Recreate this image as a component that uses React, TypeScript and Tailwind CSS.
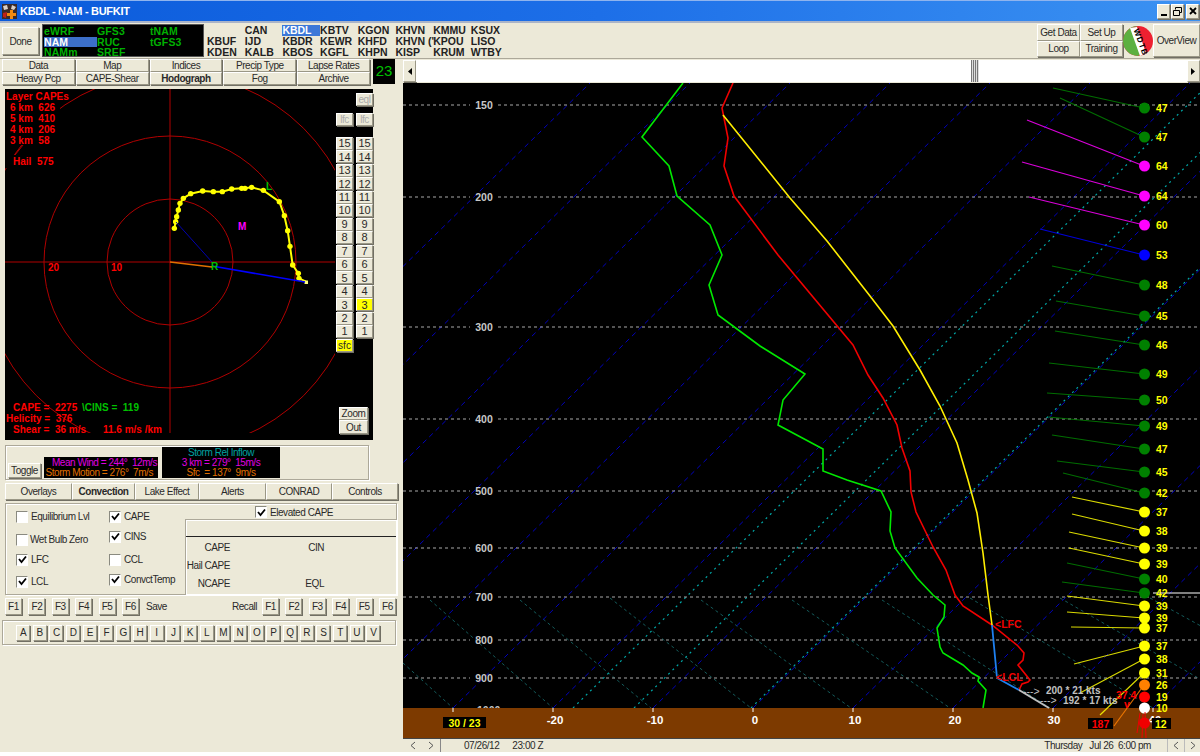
import type { ReactNode } from 'react'

const raised =
  'flex items-center justify-center whitespace-nowrap bg-[#ece9d8] border border-t-white border-l-white border-r-[#9a9786] border-b-[#9a9786] shadow-[1px_1px_0_#716f64] text-[#2a2a2a]'
const groove = 'border border-[#aca899] shadow-[1px_1px_0_#fff,inset_1px_1px_0_#fff]'

function Btn({ className = '', children }: { className?: string; children?: ReactNode }) {
  return <div className={`${raised} ${className}`}>{children}</div>
}

function Check({ label, on, className = '', gap = 'ml-[2px]' }: { label: string; on?: boolean; className?: string; gap?: string }) {
  return (
    <div className={`flex items-center h-[13px] ${className}`}>
      <div className="w-[12px] h-[12px] bg-white border border-t-[#8a8a80] border-l-[#8a8a80] border-r-white border-b-white flex items-center justify-center shrink-0">
        {on && (
          <svg width="9" height="9" viewBox="0 0 9 9">
            <path d="M1 4 L3.5 7 L8 1.5" fill="none" stroke="#000" strokeWidth="1.8" />
          </svg>
        )}
      </div>
      <span className={`${gap} whitespace-nowrap`}>{label}</span>
    </div>
  )
}

const modelCols = [
  [['eWRF'], ['NAM', 1], ['NAMm']],
  [['GFS3'], ['RUC'], ['SREF']],
  [['tNAM'], ['tGFS3'], ['']],
] as const

const stations = [
  ['', 'KBUF', 'KDEN'],
  ['CAN', 'IJD', 'KALB'],
  ['KBDL', 'KBDR', 'KBOS'],
  ['KBTV', 'KEWR', 'KGFL'],
  ['KGON', 'KHFD', 'KHPN'],
  ['KHVN', "KHVN ('", 'KISP'],
  ['KMMU', 'KPOU', 'KRUM'],
  ['KSUX', 'LISO', 'WTBY'],
]

const topTabs = ['Data', 'Map', 'Indices', 'Precip Type', 'Lapse Rates', 'Heavy Pcp', 'CAPE-Shear', 'Hodograph', 'Fog', 'Archive']
const lowerTabs = [
  ['Overlays', 'w-[67px]'],
  ['Convection', 'w-[63px]'],
  ['Lake Effect', 'w-[64px]'],
  ['Alerts', 'w-[67px]'],
  ['CONRAD', 'w-[66px]'],
  ['Controls', 'w-[66px]'],
]
const letters = 'ABCDEFGHIJKLMNOPQRSTUV'.split('')
const fkeys = ['F1', 'F2', 'F3', 'F4', 'F5', 'F6']
const levels = [15, 14, 13, 12, 11, 10, 9, 8, 7, 6, 5, 4, 3, 2, 1]

const hodoPts = [
  [523, 430], [527, 410], [530, 395], [535, 375], [540, 355], [550, 340], [572, 326], [608, 318], [640, 320],
  [667, 320], [695, 312], [725, 310], [735, 310], [755, 307], [790, 316], [838, 350], [853, 392], [863, 437],
  [870, 484], [878, 540], [895, 565], [897, 580], [918, 590],
].map(([x, y]) => [x / 3, y / 3 + 85])

function Hodograph() {
  const red = 'fill-[#ff0000]'
  return (
    <svg viewBox="5 89 368 351" className="absolute inset-0 w-full h-full text-[10px] font-bold tracking-normal">
      <defs>
        <clipPath id="hodoClip">
          <rect x="5" y="89" width="330" height="344" />
        </clipPath>
      </defs>
      <g clipPath="url(#hodoClip)" fill="none" stroke="#b00000" strokeWidth="1">
        <circle cx="170" cy="262" r="63" />
        <circle cx="170" cy="262" r="126" />
        <circle cx="170" cy="262" r="189" />
        <path d="M170 89V433M5 262H335" />
      </g>
      <rect x="5" y="89" width="55" height="56" fill="#000" />
      <rect x="5" y="155" width="52" height="13" fill="#000" />
      <path d="M23 145 L15 155" stroke="#b00000" fill="none" />
      <polyline points={hodoPts.map(p => p.join(',')).join(' ')} fill="none" stroke="#ffff00" strokeWidth="2" />
      {hodoPts.slice(0, -1).map(([x, y], i) => (
        <circle key={i} cx={x} cy={y} r="2.7" fill="#ffff00" />
      ))}
      <rect x="304.5" y="280.5" width="3.5" height="3.5" fill="#ffff80" />
      <path d="M176 222 L212 262" stroke="#0000b0" strokeWidth="1" />
      <path d="M170 262 L212 267" stroke="#e07000" strokeWidth="1.5" />
      <path d="M212 266 L305 282" stroke="#0000ff" strokeWidth="1.6" />
      <text x="266" y="190" className="fill-[#00c000]">L</text>
      <text x="238" y="230" className="fill-[#ff00ff]">M</text>
      <text x="211" y="270" className="fill-[#00c000]">R</text>
      <text x="48" y="271" className={red}>20</text>
      <text x="111" y="271" className={red}>10</text>
      <text x="6" y="100" className={red}>Layer CAPEs</text>
      <text x="10" y="111" className={red} xmlSpace="preserve">6 km  626</text>
      <text x="10" y="122" className={red} xmlSpace="preserve">5 km  410</text>
      <text x="10" y="133" className={red} xmlSpace="preserve">4 km  206</text>
      <text x="10" y="144" className={red} xmlSpace="preserve">3 km  58</text>
      <text x="13" y="165" className={red} xmlSpace="preserve">Hail  575</text>
      <text x="13" y="411" className={red} xmlSpace="preserve">CAPE =  2275</text>
      <text x="82" y="411" className="fill-[#00c000]" xmlSpace="preserve">\CINS =  119</text>
      <text x="6" y="422" className={red} xmlSpace="preserve">Helicity =  376</text>
      <text x="13" y="433" className={red} xmlSpace="preserve">Shear =  36 m/s</text>
      <text x="103" y="433" className={red}>11.6 m/s /km</text>
    </svg>
  )
}

type Wind = [number, string, number, number?, number?]
const winds: Wind[] = [
  [108, '#008000', 47, 1053, 88],
  [137, '#008000', 47, 1060, 98],
  [166, '#ff00ff', 64, 1027, 120],
  [196, '#ff00ff', 64, 1022, 162],
  [225, '#ff00ff', 60, 1029, 197],
  [255, '#0000ff', 53, 1040, 229],
  [285, '#008000', 48, 1052, 266],
  [316, '#008000', 45, 1056, 301],
  [345, '#008000', 46, 1055, 331],
  [374, '#008000', 49, 1049, 363],
  [400, '#008000', 50, 1047, 393],
  [426, '#008000', 49, 1048, 417],
  [449, '#008000', 47, 1052, 435],
  [472, '#008000', 45, 1057, 461],
  [493, '#008000', 42, 1063, 473],
  [512, '#ffff00', 37, 1072, 497],
  [531, '#ffff00', 38, 1072, 514],
  [548, '#ffff00', 39, 1069, 532],
  [564, '#ffff00', 39, 1069, 548],
  [579, '#008000', 40, 1067, 563],
  [593, '#008000', 42, 1062, 582],
  [606, '#ffff00', 39, 1067, 596],
  [618, '#ffff00', 39, 1067, 612],
  [628, '#ffff00', 37, 1071, 627],
  [646, '#ffff00', 37, 1074, 664],
  [659, '#ffff00', 38, 1080, 693],
  [673, '#ffff00', 31, 1100, 715],
  [685, '#ff8000', 26, 1114, 726],
  [697, '#ff0000', 19],
  [708, '#ffffff', 10],
]

const pressures = [
  [150, 105], [200, 197], [300, 327], [400, 419], [500, 491], [600, 548], [700, 597], [800, 640], [900, 678],
]
const isotherms = [-47, 53, 153, 253, 353, 453, 553, 653, 753, 853, 953, 1053, 1153]
const mixing = [573, 634, 751]
const adiabats = [
  [430, 600, 553], [520, 600, 651], [610, 598, 751], [701, 600, 851], [792, 600, 950],
  [882, 600, 1050], [970, 598, 1153], [1060, 598, 1250], [1150, 598, 1350],
]

const dewPts = '683,83 642,137 669,166 677,196 710,225 722,255 709,285 718,315 760,346 805,374 783,400 778,425 823,449 823,471 847,480 881,491 891,512 890,531 895,548 917,578 933,595 945,605 944,617 937,628 940,647 943,653 963,665 972,673 979,677 978,681 986,690 983,708'
const tempPts = '733,83 722,108 728,138 724,166 734,196 778,255 853,345 868,375 883,398 897,425 902,448 910,471 911,492 916,512 933,547 946,570 955,595 963,606 992,625 1018,646 1024,653 1023,660 1018,665 1030,680 1028,682 1022,684 1019,690'
const parcelPts = '723,115 790,198 827,241 870,296 893,326 920,370 940,406 957,443 968,480 977,513 983,553 988,595 992,625'

function Skewt() {
  return (
    <svg viewBox="403 83 797 655" className="block w-[797px] h-[655px] bg-black text-[10.5px] font-bold tracking-normal">
      {adiabats.map(([x, y, x2], i) => (
        <path key={i} d={`M${x} ${y}L${x2} 708`} stroke="#145a5a" strokeDasharray="3 3" strokeWidth="1" />
      ))}
      <path d="M403 663L453 708" stroke="#145a5a" strokeDasharray="3 3" />
      {isotherms.map(x => (
        <path key={x} d={`M${x} 708L${x + 637} 83`} stroke="#0000c0" strokeDasharray="5 4" strokeWidth="1" />
      ))}
      {mixing.map(x => (
        <path key={x} d={`M${x} 708L${x + 637} 83`} stroke="#00a8a8" strokeDasharray="2 4" strokeWidth="1.2" />
      ))}
      {pressures.map(([p, y]) => (
        <g key={p}>
          <path d={`M403 ${y}H470M498 ${y}H1200`} stroke="#a8a8a8" strokeDasharray="3 3" strokeWidth="1" />
          <text x="484" y={y + 4} textAnchor="middle" className="fill-[#c8c8c8]">{p}</text>
        </g>
      ))}
      <path d="M1153 593H1200" stroke="#fff" strokeWidth="1" />
      <polyline points={dewPts} fill="none" stroke="#00e800" strokeWidth="1.6" />
      <polyline points={tempPts} fill="none" stroke="#f00000" strokeWidth="1.6" />
      <polyline points={parcelPts} fill="none" stroke="#ffee00" strokeWidth="1.6" />
      <path d="M992 625L997 678L1019 690" fill="none" stroke="#1e80f0" strokeWidth="1.8" />
      <text x="477" y="714" className="fill-[#c8c8c8]">1000</text>
      <rect x="403" y="708" width="797" height="30" fill="#7d3a00" />
      <path d="M1019 690L1049 708" stroke="#c0c0c0" strokeWidth="2" />
      {[453, 553, 653, 753, 853, 953, 1053, 1153].map(x => (
        <path key={x} d={`M${x} 708V712`} stroke="#fff" />
      ))}
      {[[-20, 555], [-10, 655], [0, 755], [10, 855], [20, 955], [30, 1054], [40, 1155]].map(([t, x]) => (
        <text key={x} x={x} y="724" textAnchor="middle" className="fill-white text-[11.5px]">{t}</text>
      ))}
      <rect x="443" y="717" width="43" height="11" fill="#000" />
      <text x="464.5" y="726.5" textAnchor="middle" className="fill-[#ffff00]">30 / 23</text>
      {winds.map(([y, c, v, ex, ey]) => (
        <g key={y}>
          {ex && <path d={`M1144 ${y}L${ex} ${ey}`} stroke={c} strokeWidth="1.2" opacity="0.85" />}
          <circle cx="1144.5" cy={y} r="5.5" fill={c} />
          <text x="1156" y={y + 4} className="fill-[#ffff00]">{v}</text>
        </g>
      ))}
      <path d="M1140 713L1137 733M1143 714L1142 738M1145 712L1146 738" stroke="#f00000" strokeWidth="1" />
      <circle cx="1144.5" cy="723" r="5.5" fill="#f00000" />
      <rect x="1152" y="718" width="19" height="11" fill="#000" />
      <text x="1155" y="727.5" className="fill-[#ffff00]">12</text>
      <rect x="1088" y="718" width="25" height="11" fill="#000" />
      <text x="1100.5" y="727.5" textAnchor="middle" className="fill-[#ff0000]">187</text>
      <text x="1116" y="699" className="fill-[#ff0000]">37.4</text>
      <text x="1124" y="708" className="fill-[#ff0000]">v</text>
      <text x="995" y="628" className="fill-[#f00000]">{'<LFC'}</text>
      <text x="996" y="681" className="fill-[#f00000]">{'<LCL'}</text>
      <text x="1023" y="695" className="fill-[#c0c0c0] font-normal">---&gt;</text>
      <text x="1046" y="694" className="fill-[#c0c0c0] text-[10px]">200 * 21 kts</text>
      <text x="1040" y="704" className="fill-[#c0c0c0] font-normal">---&gt;</text>
      <text x="1063" y="704" className="fill-[#c0c0c0] text-[10px]">192 * 17 kts</text>
    </svg>
  )
}

function Arrow({ dir }: { dir: 'l' | 'r' }) {
  return (
    <svg width="5" height="7" viewBox="0 0 5 7">
      <path d={dir === 'l' ? 'M5 0V7L1 3.5Z' : 'M0 0V7L4 3.5Z'} fill="#000" />
    </svg>
  )
}

function Chevron({ dir }: { dir: 'l' | 'r' }) {
  return (
    <svg width="6" height="9" viewBox="0 0 6 9">
      <path d={dir === 'l' ? 'M5 1L1 4.5L5 8' : 'M1 1L5 4.5L1 8'} fill="none" stroke="#555" />
    </svg>
  )
}

export default function App() {
  return (
    <div className="w-[1200px] h-[756px] overflow-hidden bg-white font-['Liberation_Sans',Arial,sans-serif] text-[10px] tracking-[-0.45px] text-[#2a2a2a]">
      <div className="h-[752px] bg-[#ece9d8] flex flex-col">
        {/* Title bar */}
        <div className="h-[23px] shrink-0 flex items-center border-t border-[#8fb4ee] border-b-2 border-b-[#aab4c8] bg-[linear-gradient(90deg,#0b5bdb,#1d6fe8_50%,#3b92f2)]">
          <svg width="15" height="15" viewBox="0 0 15 15" className="ml-[2px]">
            <rect width="15" height="15" fill="#3a2a28" />
            <path d="M1 2L5 1L6 5L2 6ZM10 1L14 3L12 6L9 5Z" fill="#d8d0c8" />
            <path d="M8 6H11V9H14V12H11V15H8V12H5V9H8Z" fill="#f08a10" />
            <path d="M1 9L5 8L4 14L1 13Z" fill="#c02018" />
          </svg>
          <span className="ml-[3px] text-white text-[11px] font-bold tracking-[-0.3px]">KBDL - NAM - BUFKIT</span>
          <div className="ml-auto mr-[1px] flex gap-[1px]">
            <Btn className="w-[13px] h-[15px]"><span className="w-[6px] h-[2px] bg-black mt-[7px]" /></Btn>
            <Btn className="w-[13px] h-[15px] mr-[1px]">
              <svg width="9" height="9" viewBox="0 0 9 9">
                <path d="M2.5 2.5V.5H8.5V5.5H6.5M.5 3.5H6.5V8.5H.5Z" fill="none" stroke="#000" />
              </svg>
            </Btn>
            <Btn className="w-[13px] h-[15px]">
              <svg width="8" height="8" viewBox="0 0 8 8">
                <path d="M1 1L7 7M7 1L1 7" stroke="#000" strokeWidth="1.8" />
              </svg>
            </Btn>
          </div>
        </div>

        {/* Top toolbar */}
        <div className="h-[36px] shrink-0 flex border-b border-[#aca899]">
          <Btn className="ml-[2px] mt-[4px] w-[37px] h-[28px]">Done</Btn>
          <div className="ml-[3px] mt-[1px] w-[162px] h-[33px] bg-black flex pl-[1px] text-[10.5px] font-bold tracking-[0.1px] text-[#00b000] border border-[#555]">
            {modelCols.map((col, i) => (
              <div key={i} className="w-[53px] flex flex-col pt-[1px]">
                {col.map(([name, sel]) => (
                  <div key={name || 'x'} className={`h-[10.5px] leading-[10.5px] ${sel ? 'bg-[#3c6fc8] text-white' : ''}`}>{name}</div>
                ))}
              </div>
            ))}
          </div>
          <div className="ml-[3px] flex pt-[2px] text-[10.5px] font-bold tracking-[0px] text-[#222] flex-1">
            {stations.map((col, i) => (
              <div key={i} className="w-[37.7px] shrink-0 flex flex-col">
                {col.map((s, j) => (
                  <div key={j} className={`h-[10.8px] leading-[11px] whitespace-nowrap ${s === 'KBDL' ? 'bg-[#3c78d8] text-white' : ''}`}>{s}</div>
                ))}
              </div>
            ))}
          </div>
          <div className="grid grid-cols-2 grid-rows-2 w-[86px] h-[33px] mt-[1px]">
            <Btn>Get Data</Btn>
            <Btn>Set Up</Btn>
            <Btn>Loop</Btn>
            <Btn>Training</Btn>
          </div>
          <svg width="30" height="30" viewBox="0 0 30 30" className="mt-[3px] tracking-normal">
            <circle cx="15" cy="15" r="15" fill="#ee2030" />
            <path d="M15 0A15 15 0 0 0 15 30L18 28L9 2Z" fill="#5cb040" />
            <path d="M7 2L14 1L23 27L17 30Z" fill="#fff" />
            <text transform="translate(10.5 4) rotate(70)" className="text-[8px] font-bold fill-black tracking-[1px]">WDTB</text>
          </svg>
          <Btn className="w-[47px] h-[33px] mt-[1px]">OverView</Btn>
        </div>

        {/* Main */}
        <div className="flex-1 min-h-0 flex">
          {/* Left column */}
          <div className="w-[403px] shrink-0 flex flex-col">
            <div className="h-[26px] pl-[2px] flex">
              <div className="w-[368px] grid grid-cols-5 grid-rows-2 gap-x-[1px]">
                {topTabs.map(t => (
                  <Btn key={t} className={t === 'Hodograph' ? 'font-bold' : ''}>{t}</Btn>
                ))}
              </div>
              <div className="ml-[3px] w-[22px] h-[25px] bg-black text-[#00c000] text-[15px] tracking-normal flex items-center justify-center">23</div>
            </div>

            <div className="relative mt-[4px] ml-[5px] w-[368px] h-[351px] bg-black shrink-0">
              <Hodograph />
              <Btn className="absolute left-[351px] top-[4px] w-[17px] h-[13px] text-[#aaa]">eql</Btn>
              <Btn className="absolute left-[331px] top-[24px] w-[17px] h-[13px] text-[#aaa]">lfc</Btn>
              <Btn className="absolute left-[351px] top-[24px] w-[17px] h-[13px] text-[#aaa]">lfc</Btn>
              <div className="absolute left-[331px] top-[48px] flex flex-col w-[17px] gap-[0.45px] text-[11px] tracking-normal">
                {levels.map(n => (
                  <Btn key={n} className="h-[13px]">{n}</Btn>
                ))}
                <Btn className="h-[13px] bg-[#ffff00] text-[10px]">sfc</Btn>
              </div>
              <div className="absolute left-[351px] top-[48px] flex flex-col w-[17px] gap-[0.45px] text-[11px] tracking-normal">
                {levels.map(n => (
                  <Btn key={n} className={`h-[13px] ${n === 3 ? 'bg-[#ffff00]' : ''}`}>{n}</Btn>
                ))}
              </div>
              <div className="absolute left-[334px] top-[318px] w-[29px]">
                <Btn className="h-[13px]">Zoom</Btn>
                <Btn className="h-[14px]">Out</Btn>
              </div>
            </div>

            <div className={`mt-[5px] ml-[5px] w-[364px] h-[35px] shrink-0 flex items-end pb-[1px] ${groove}`}>
              <Btn className="ml-[2px] w-[33px] h-[15px]">Toggle</Btn>
              <div className="ml-[3px] w-[114px] h-[21px] bg-black flex flex-col items-end pr-[1px] leading-[10px] pt-[1px] whitespace-pre">
                <div className="text-[#e000e0]">Mean Wind = 244°  12m/s</div>
                <div className="text-[#e07000] pr-[4px]">Storm Motion = 276°  7m/s</div>
              </div>
              <div className="ml-[4px] w-[118px] h-[31px] bg-black flex flex-col items-center leading-[10px] pt-[1px] whitespace-pre">
                <div className="text-[#00a0a0]">Storm Rel Inflow</div>
                <div className="text-[#e000e0]">3 km = 279°  15m/s</div>
                <div className="text-[#e07000]">Sfc  = 137°  9m/s</div>
              </div>
            </div>

            <div className="mt-[3px] ml-[5px] h-[17px] shrink-0 flex">
              {lowerTabs.map(([t, w]) => (
                <Btn key={t} className={`${w} ${t === 'Convection' ? 'font-bold' : ''}`}>{t}</Btn>
              ))}
            </div>

            <div className={`mt-[3px] ml-[5px] w-[392px] h-[92px] shrink-0 flex ${groove}`}>
              <div className="w-[103px] pl-[10px] pt-[6px] shrink-0">
                <Check label="Equilibrium Lvl" gap="ml-[3px]" />
                <Check label="Wet Bulb Zero" className="mt-[10px]" gap="ml-[2px]" />
                <Check label="LFC" on className="mt-[7px]" gap="ml-[3px]" />
                <Check label="LCL" on className="mt-[9px]" gap="ml-[3px]" />
              </div>
              <div className="w-[76px] pt-[6px] shrink-0">
                <Check label="CAPE" on gap="ml-[3px]" />
                <Check label="CINS" on className="mt-[7px]" gap="ml-[3px]" />
                <Check label="CCL" className="mt-[10px]" gap="ml-[3px]" />
                <Check label="ConvctTemp" on className="mt-[7px]" gap="ml-[3px]" />
              </div>
              <div className="flex-1 flex flex-col">
                <Check label="Elevated CAPE" on className="ml-[70px] mt-[1px] h-[14px]" gap="ml-[3px]" />
                <div className={`flex-1 flex flex-col ${groove} border-r-0 border-b-0`}>
                  <div className="h-[17px] border-b border-[#222]" />
                  <div className="flex-1 grid grid-cols-[44px_94px] grid-rows-3 items-center text-right pt-[2px] pb-[2px]">
                    <div>CAPE</div>
                    <div>CIN</div>
                    <div className="whitespace-nowrap">Hail CAPE</div>
                    <div />
                    <div>NCAPE</div>
                    <div>EQL</div>
                  </div>
                </div>
              </div>
            </div>

            <div className="mt-[2px] ml-[5px] w-[391px] h-[19px] shrink-0 flex items-center">
              <div className="flex gap-[6.4px]">
                {fkeys.map(f => (
                  <Btn key={f} className="w-[17px] h-[17px]">{f}</Btn>
                ))}
              </div>
              <span className="ml-[7px]">Save</span>
              <span className="ml-auto mr-[5px]">Recall</span>
              <div className="flex gap-[6.4px]">
                {fkeys.map(f => (
                  <Btn key={f} className="w-[17px] h-[17px]">{f}</Btn>
                ))}
              </div>
            </div>

            <div className={`mt-[4px] ml-[2px] w-[394px] h-[25px] shrink-0 flex items-center pl-[13px] gap-[2.7px] ${groove}`}>
              {letters.map(l => (
                <Btn key={l} className="w-[14px] h-[16px]">{l}</Btn>
              ))}
            </div>
          </div>

          {/* Right column */}
          <div className="flex-1 min-w-0 flex flex-col">
            <div className="h-[24px] shrink-0 flex pt-[1px] pb-[1px]">
              <Btn className="w-[13px]"><Arrow dir="l" /></Btn>
              <div className="w-[555px] bg-white" />
              <div className="w-[8px] bg-[repeating-linear-gradient(90deg,#777_0_1px,#ddd_1px_2px)]" />
              <div className="flex-1 bg-white" />
              <Btn className="w-[13px]"><Arrow dir="r" /></Btn>
            </div>
            <Skewt />
            <div className="h-[14px] shrink-0 flex items-center border-t border-[#444]">
              <div className="w-[18px] flex justify-center ml-[1px]"><Chevron dir="l" /></div>
              <div className="w-[18px] flex justify-center"><Chevron dir="r" /></div>
              <div className="w-[1px] h-full bg-[#888]" />
              <span className="ml-[23px]">07/26/12</span>
              <span className="ml-[13px]">23:00 Z</span>
              <span className="ml-auto whitespace-pre">Thursday   Jul 26  6:00 pm</span>
              <div className="ml-[16px] w-[1px] h-full bg-[#bbb]" />
              <div className="w-[16px] flex justify-center"><Chevron dir="l" /></div>
              <div className="w-[1px] h-full bg-[#bbb]" />
              <div className="w-[15px] flex justify-center"><Chevron dir="r" /></div>
            </div>
          </div>
        </div>
      </div>
    </div>
  )
}
